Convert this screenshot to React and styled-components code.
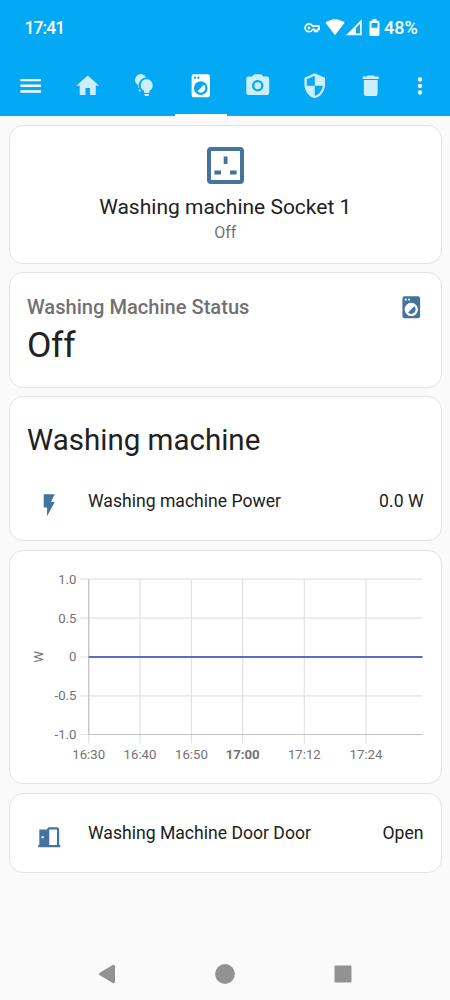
import React from 'react'
import styled, { createGlobalStyle } from 'styled-components'

const icons = {
  menu: 'M3,6H21V8H3V6M3,11H21V13H3V11M3,16H21V18H3V16Z',
  home: 'M10,20V14H14V20H19V12H22L12,3L2,12H5V20H10Z',
  bulbs:
    'M13.4,4.9A5.2,5.2 0 1 0 6.2,11.6V13.4Q6.2,14.1 7,14.100A6.900,6.900 0 0 1 13.400,4.900M6.900,15.200H7.900L9,16.900H7.700Q6.900,16.900 6.900,16.100ZM13.700,6.400A5.200,5.200 0 0 1 16.100,16.200V17.500Q16.100,18.400 15.200,18.400H12.200Q11.300,18.400 11.300,17.500V16.200A5.200,5.200 0 0 1 13.700,6.400M11.700,19.300H15.700V20.100Q15.700,21 14.800,21H12.600Q11.700,21 11.700,20.100Z',
  washer:
    'M14.83,11.17C16.39,12.73 16.39,15.27 14.83,16.83C13.27,18.39 10.73,18.39 9.17,16.83L14.83,11.17M6,2H18A2,2 0 0,1 20,4V20A2,2 0 0,1 18,22H6A2,2 0 0,1 4,20V4A2,2 0 0,1 6,2M7,4A1,1 0 0,0 6,5A1,1 0 0,0 7,6A1,1 0 0,0 8,5A1,1 0 0,0 7,4M10,4A1,1 0 0,0 9,5A1,1 0 0,0 10,6A1,1 0 0,0 11,5A1,1 0 0,0 10,4M12,8A6,6 0 0,0 6,14A6,6 0 0,0 12,20A6,6 0 0,0 18,14A6,6 0 0,0 12,8Z',
  camera:
    'M4,4H7L9,2H15L17,4H20A2,2 0 0,1 22,6V18A2,2 0 0,1 20,20H4A2,2 0 0,1 2,18V6A2,2 0 0,1 4,4M12,7A5,5 0 0,0 7,12A5,5 0 0,0 12,17A5,5 0 0,0 17,12A5,5 0 0,0 12,7M12,9A3,3 0 0,1 15,12A3,3 0 0,1 12,15A3,3 0 0,1 9,12A3,3 0 0,1 12,9Z',
  shield:
    'M12,12H19C18.47,16.11 15.72,19.78 12,20.92V12H5V6.3L12,3.19M12,1L3,5V11C3,16.55 6.84,21.73 12,23C17.16,21.73 21,16.55 21,11V5L12,1Z',
  trash:
    'M19,4H15.5L14.5,3H9.5L8.5,4H5V6H19M6,19A2,2 0 0,0 8,21H16A2,2 0 0,0 18,19V7H6V19Z',
  dots: 'M12,16A2,2 0 1,1 12,20A2,2 0 1,1 12,16M12,10A2,2 0 1,1 12,14A2,2 0 1,1 12,10M12,4A2,2 0 1,1 12,8A2,2 0 1,1 12,4Z',
  flash: 'M7,2H17L13.5,9H17L10,22V14H7V2Z',
  door: 'M12,3C10.89,3 10,3.89 10,5H3V19H2V21H22V19H21V5C21,3.89 20.11,3 19,3H12M12,5H19V19H12V5M5,11H7V13H5V11Z',
}

const tabs = ['home', 'bulbs', 'washer', 'camera', 'shield', 'trash']

const yTicks = [
  { label: '1.0', y: 28.2 },
  { label: '0.5', y: 67.2 },
  { label: '0', y: 106 },
  { label: '-0.5', y: 144.8 },
  { label: '-1.0', y: 183.5 },
]

const xTicks = [
  { label: '16:30', x: 78.7 },
  { label: '16:40', x: 130 },
  { label: '16:50', x: 181.4 },
  { label: '17:00', x: 232.7, bold: true },
  { label: '17:12', x: 294.3 },
  { label: '17:24', x: 356 },
]

const Icon = ({ name, size = 27.5 }) => (
  <IconSvg viewBox='0 0 24 24' width={size} height={size}>
    <path d={icons[name]} fillRule='evenodd' />
  </IconSvg>
)

const StatusIcons = () => (
  <IconSvg viewBox='0 0 78 20' width='78' height='20'>
    {/* vpn key */}
    <g fill='none' stroke='#fff' strokeWidth='1.7' strokeLinejoin='round'>
      <path d='M8.700 8.200C7.900 6.600 6.600 5.900 5 5.900a3.900 3.900 0 0 0 0 7.800c1.600 0 2.900-.8 3.700-2.300h2v2h2.800v-2H15V8.200z' />
    </g>
    <circle cx='5' cy='9.800' r='1.400' />
    {/* wifi */}
    <path d='M31 17.200 21.500 4.700C24.300 2.500 27.500 1.300 31 1.300s6.900 1.200 9.700 3.400z' />
    {/* signal */}
    <path
      d='M57.700 1.500V17.200H42zM56 5.700 51.800 9.900V15.500H56z'
      fillRule='evenodd'
    />
    {/* battery */}
    <path
      d='M68.500 1h4v1.700h1.500q1.500 0 1.500 1.500v12.300q0 1.500-1.500 1.500h-7q-1.500 0-1.500-1.500V4.200q0-1.500 1.500-1.500h1.500zM67.500 4.900v4.900h6V4.900z'
      fillRule='evenodd'
    />
  </IconSvg>
)

const SocketIcon = () => (
  <IconSvg viewBox='0 0 37 37' width='37' height='37'>
    <path
      d='M4 0H33A4 4 0 0 1 37 4V33A4 4 0 0 1 33 37H4A4 4 0 0 1 0 33V4A4 4 0 0 1 4 0M4 4V33H33V4ZM16.700 9.500H20.500V17H16.700ZM7.400 23.500H14V27.500H7.400ZM23 23.500H29.600V27.500H23Z'
      fillRule='evenodd'
    />
  </IconSvg>
)

const PowerChart = () => (
  <ChartSvg viewBox='0 0 431 232' width='431' height='232'>
    {yTicks.map(({ label, y }) => (
      <g key={label}>
        <line x1='70.500' x2='412.500' y1={y} y2={y} />
        <text x='66.500' y={y + 4.3} textAnchor='end'>
          {label}
        </text>
      </g>
    ))}
    {xTicks.map(({ label, x, bold }) => (
      <g key={label}>
        <line x1={x} x2={x} y1='28.200' y2='192.500' />
        <text
          x={x}
          y='207.500'
          textAnchor='middle'
          fontWeight={bold ? 700 : 400}
        >
          {label}
        </text>
      </g>
    ))}
    <path className='axis' d='M78.700 28.200V183.500H412.500' />
    <path className='series' d='M78.700 106H412.500' />
    <text transform='translate(33 106) rotate(-90)' textAnchor='middle'>
      W
    </text>
  </ChartSvg>
)

const App = () => {
  return (
    <Screen>
      <GlobalStyle />
      <Header>
        <StatusBar>
          <span className='time'>17:41</span>
          <StatusIcons />
          <span className='battery'>48%</span>
        </StatusBar>
        <Toolbar>
          <MenuButton aria-label='Menu'>
            <Icon name='menu' />
          </MenuButton>
          {tabs.map((name) => (
            <Tab key={name} $active={name === 'washer'}>
              <Icon name={name} />
            </Tab>
          ))}
          <MoreButton aria-label='More'>
            <Icon name='dots' size={26} />
          </MoreButton>
        </Toolbar>
      </Header>

      <Cards>
        <SocketCard>
          <SocketIcon />
          <span className='name'>Washing machine Socket 1</span>
          <span className='state'>Off</span>
        </SocketCard>

        <StatusCard>
          <div className='header'>
            <span>Washing Machine Status</span>
            <Icon name='washer' size={26.5} />
          </div>
          <div className='value'>Off</div>
        </StatusCard>

        <EntitiesCard $height={144.8}>
          <h1>Washing machine</h1>
          <EntityRow>
            <Icon name='flash' size={26.5} />
            <span className='label'>Washing machine Power</span>
            <span>0.0 W</span>
          </EntityRow>
        </EntitiesCard>

        <Card $height={234.5}>
          <PowerChart />
        </Card>

        <EntitiesCard $height={80}>
          <EntityRow>
            <Icon name='door' size={26.5} />
            <span className='label'>Washing Machine Door Door</span>
            <span>Open</span>
          </EntityRow>
        </EntitiesCard>
      </Cards>

      <NavBar>
        <svg width='20' height='22' viewBox='0 0 20 22'>
          <path d='M2.500 11 15.500 3.300V18.700Z' strokeWidth='3' />
        </svg>
        <svg width='20' height='22' viewBox='0 0 20 22'>
          <circle cx='10' cy='11' r='9.900' />
        </svg>
        <svg width='20' height='22' viewBox='0 0 20 22'>
          <rect x='2.500' y='3.500' width='15' height='15' strokeWidth='2' />
        </svg>
      </NavBar>
    </Screen>
  )
}

const GlobalStyle = createGlobalStyle`
  * {
    box-sizing: border-box;
  }
  body {
    margin: 0;
    background-color: #fafafa;
    font-family: Roboto, sans-serif;
    color: #212121;
  }
`

const Screen = styled.div`
  width: 450px;
  height: 1000px;
  display: flex;
  flex-direction: column;
  overflow: hidden;
`

const IconSvg = styled.svg`
  display: block;
  flex: none;
  fill: currentColor;
`

const Header = styled.header`
  flex: none;
  height: 116px;
  background-color: #03a9f4;
  color: #fff;
`

const StatusBar = styled.div`
  height: 56px;
  display: flex;
  align-items: center;
  padding: 0 30px 0 24.5px;
  font-size: 17.5px;
  font-weight: 500;
  .time {
    flex: 1;
    letter-spacing: -0.9px;
  }
  .battery {
    width: 36px;
    margin-left: 2.5px;
    padding-bottom: 1.5px;
    font-size: 18px;
  }
`

const Toolbar = styled.nav`
  height: 60px;
  display: flex;
  align-items: stretch;
`

const ToolbarButton = styled.button`
  display: flex;
  align-items: center;
  justify-content: center;
  flex: none;
  padding: 0;
  border: none;
  background: none;
  color: #fff;
`

const MenuButton = styled(ToolbarButton)`
  width: 59.3px;
  padding-left: 2px;
`

const MoreButton = styled(ToolbarButton)`
  width: 42px;
`

const Tab = styled.div`
  flex: none;
  width: 52.7px;
  margin: 0 2px;
  display: flex;
  align-items: center;
  justify-content: center;
  padding-top: 1.5px;
  border-bottom: 2px solid ${({ $active }) => ($active ? '#fff' : 'transparent')};
  color: ${({ $active }) => ($active ? '#fff' : '#cdeefd')};
`

const Cards = styled.main`
  flex: 1;
  display: flex;
  flex-direction: column;
  gap: 8.5px;
  padding: 9px 8.5px 0 9px;
`

const Card = styled.section`
  flex: none;
  height: ${({ $height }) => $height}px;
  background-color: #fff;
  border: 1px solid #e3e3e3;
  border-radius: 14px;
`

const SocketCard = styled(Card).attrs({ $height: 138.8 })`
  display: flex;
  flex-direction: column;
  align-items: center;
  padding-top: 21px;
  svg {
    color: #44739e;
  }
  .name {
    margin-top: 10px;
    font-size: 21px;
    line-height: 26px;
  }
  .state {
    margin-top: 3px;
    font-size: 16px;
    line-height: 20px;
    color: #727272;
  }
`

const StatusCard = styled(Card).attrs({ $height: 115.5 })`
  padding: 19.5px 16.5px 0 17px;
  .header {
    display: flex;
    align-items: center;
    justify-content: space-between;
    font-size: 20.1px;
    font-weight: 500;
    line-height: 28px;
    color: #727272;
  }
  svg {
    color: #44739e;
  }
  .value {
    margin-top: 1px;
    font-size: 35.5px;
    line-height: 46px;
    letter-spacing: -0.3px;
  }
`

const EntitiesCard = styled(Card)`
  display: flex;
  flex-direction: column;
  justify-content: flex-end;
  padding: 0 17px 14.5px 17px;
  h1 {
    margin: 0 0 15.5px;
    font-size: 29.5px;
    font-weight: 400;
    line-height: 48px;
  }
`

const EntityRow = styled.div`
  height: 46px;
  display: flex;
  align-items: center;
  padding-left: 8.5px;
  font-size: 17.6px;
  svg {
    margin-top: 6px;
    color: #44739e;
  }
  span {
    padding-bottom: 3px;
  }
  .label {
    flex: 1;
    margin-left: 26px;
  }
`

const ChartSvg = styled.svg`
  display: block;
  font-size: 13.2px;
  fill: #727272;
  line {
    stroke: #e2e2e2;
    stroke-width: 1.2;
  }
  .axis {
    fill: none;
    stroke: #c4c4c4;
    stroke-width: 1.2;
  }
  .series {
    stroke: #5470c6;
    stroke-width: 1.9;
  }
`

const NavBar = styled.footer`
  flex: none;
  height: 53px;
  display: flex;
  justify-content: space-between;
  align-items: center;
  padding: 0 97.5px;
  fill: #929292;
  stroke: #929292;
  stroke-width: 0;
  stroke-linejoin: round;
`

export default App
